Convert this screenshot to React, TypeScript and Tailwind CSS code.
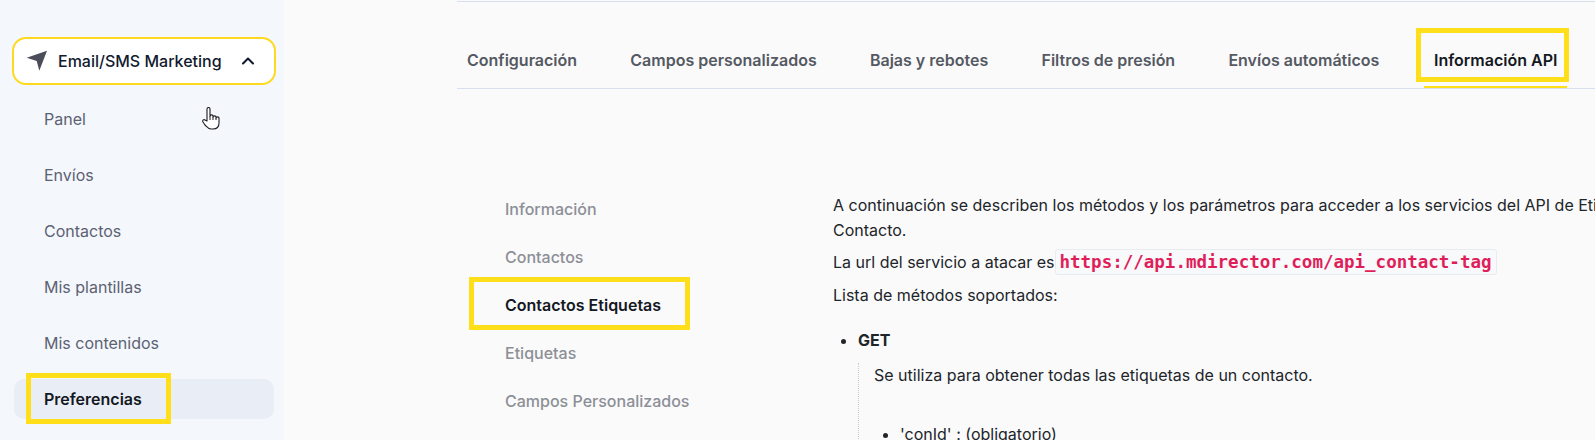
import { ChevronUp } from 'lucide-react';

const sideItems = ['Panel', 'Envíos', 'Contactos', 'Mis plantillas', 'Mis contenidos'];
const tabs = ['Configuración', 'Campos personalizados', 'Bajas y rebotes', 'Filtros de presión', 'Envíos automáticos'];
const docItems = ['Información', 'Contactos'];

function HighlightBox({ className }: { className: string }) {
  return <div className={`pointer-events-none absolute border-[5px] border-[#ffdf1a] ${className}`} />;
}

function Sidebar() {
  return (
    <aside className="relative w-[284px] shrink-0 bg-[#f4f7fc] pl-[12px] pt-[37px]">
      <button className="flex h-[48px] w-[264px] items-center rounded-[14px] border-2 border-[#ffd91f] bg-white pl-[12px] text-[16px] font-medium text-[#111a2e]">
        <svg width="24" height="24" viewBox="0 0 24 24" className="shrink-0">
          <path d="M21 1.7.7 8.7 10.7 12l2.6 9.7z" fill="#4c4d5a" />
        </svg>
        <span className="ml-[8px]">Email/SMS Marketing</span>
        <ChevronUp size={20} strokeWidth={2.5} className="ml-[16px]" />
      </button>
      <nav className="ml-[2px] mt-[14px] flex w-[260px] flex-col gap-4">
        {sideItems.map((item) => (
          <a key={item} className="flex h-[40px] items-center pl-[30px] text-[16px] text-[#5c6272]">
            {item}
          </a>
        ))}
        <a className="relative flex h-[40px] items-center rounded-[10px] bg-[#e9eef6] pl-[30px] text-[16px] font-semibold text-[#14181f]">
          Preferencias
          <HighlightBox className="left-[12px] top-[-6px] h-[51px] w-[145px]" />
        </a>
      </nav>
      {/* mouse cursor captured in the screenshot */}
      <svg width="18" height="23" viewBox="0 0 18 23" fill="none" className="absolute left-[202px] top-[107px]">
        <path
          d="M5 14V2C5 0 8 0 8 2V9C8 7.5 11 7.5 11 9V10C11 8.5 14 8.5 14 10V11C14 9.5 17 9.5 17 11V16C17 20 15 22 11 22H9C6 22 5 20 3 18L1 15C0 13 2 12 3 13Z"
          fill="#fff"
          stroke="#1c1c22"
          strokeWidth="1.1"
          strokeLinejoin="round"
        />
        <path d="M8 9V13M11 10V13M14 11V13" stroke="#1c1c22" strokeWidth="1" />
      </svg>
    </aside>
  );
}

function TabBar() {
  return (
    <div className="relative mt-px flex h-[88px] items-end gap-[33.25px] border-t border-b border-[#d6e0ee]">
      {tabs.map((tab) => (
        <div key={tab} className="flex h-[58px] items-start px-[10px] pt-[18px] text-[16px] font-semibold text-[#555962]">
          {tab}
        </div>
      ))}
      <div className="relative ml-[1.5px] flex h-[58px] items-start border-b-2 border-[#ffdf1a] px-[10px] pt-[18px] text-[16px] font-semibold text-[#14181f]">
        Información API
        <HighlightBox className="left-[-8px] top-[-2px] h-[54px] w-[153px]" />
      </div>
    </div>
  );
}

function DocNav() {
  return (
    <nav className="flex w-[376px] shrink-0 flex-col gap-[24px] pl-[48px] pt-[4px] text-[16px] font-medium leading-[24px] text-[#8c8f96]">
      {docItems.map((item) => (
        <a key={item}>{item}</a>
      ))}
      <a className="relative font-semibold text-[#14181f]">
        Contactos Etiquetas
        <HighlightBox className="left-[-36px] top-[-16px] h-[53px] w-[221px]" />
      </a>
      <a>Etiquetas</a>
      <a>Campos Personalizados</a>
    </nav>
  );
}

function DocContent() {
  return (
    <div className="w-[800px] text-[16px] leading-[25px] text-[#212529]">
      <p className="whitespace-nowrap">
        A continuación se describen los métodos y los parámetros para acceder a los servicios del API de Etiquetas de
        <br />
        Contacto.
      </p>
      <p className="mt-[6px] flex items-center whitespace-nowrap">
        La url del servicio a atacar es
        <code className="rounded-[3px] border border-[#e9ecef] bg-[#f8f9fa] px-[4px] font-['DejaVu_Sans_Mono',monospace] text-[17.5px] leading-[24px] font-bold text-[#e01e5a]">
          https://api.mdirector.com/api_contact-tag
        </code>
      </p>
      <p className="mt-[8px]">Lista de métodos soportados:</p>
      <ul className="mt-[20px] list-disc pl-[25px]">
        <li className="font-bold">GET</li>
      </ul>
      <div className="ml-[25px] mt-[10px] border-l border-dotted border-[#c5ccd8] pl-[15px]">
        <p>Se utiliza para obtener todas las etiquetas de un contacto.</p>
        <ul className="mt-[34px] list-disc pl-[26px]">
          <li>'conId' : (obligatorio)</li>
        </ul>
      </div>
    </div>
  );
}

export default function App() {
  return (
    <div className="flex h-[440px] w-[1595px] overflow-hidden bg-[#fafafb] font-['Inter',sans-serif]">
      <Sidebar />
      <main className="ml-[173px] flex-1">
        <TabBar />
        <div className="mt-[104px] flex">
          <DocNav />
          <DocContent />
        </div>
      </main>
    </div>
  );
}
